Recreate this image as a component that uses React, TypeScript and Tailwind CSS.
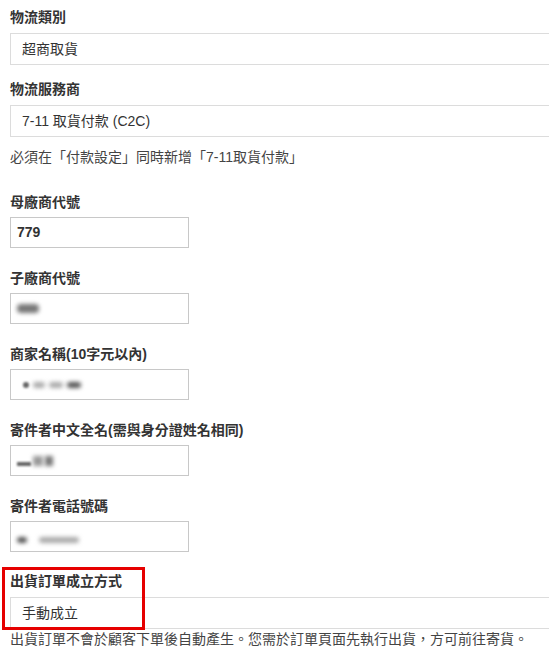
import React from "react";

const font = {
  fontFamily: '"Liberation Sans", "Noto Sans CJK TC", sans-serif',
};

function Label({ children }: { children: React.ReactNode }) {
  return <div className="h-5 leading-5 text-[14px] font-bold text-[#333]">{children}</div>;
}

function WideBox({ children }: { children: React.ReactNode }) {
  return (
    <div className="-mr-6 mt-[6px] flex h-[32px] items-center border border-[#dcdcdc] bg-white pl-[11px] text-[14px] text-[#333]">
      {children}
    </div>
  );
}

function SmallBox({ children }: { children?: React.ReactNode }) {
  return (
    <div className="mt-[5px] flex h-[31px] w-[179px] items-center border border-[#c8c8c8] bg-white pl-[6px] text-[14px] text-[#333]">
      {children}
    </div>
  );
}

function Blur({ w, dark = false }: { w: number; dark?: boolean }) {
  return (
    <span
      className={`inline-block h-[6px] rounded-full blur-[2px] ${dark ? "bg-[#555]" : "bg-[#aaa]"}`}
      style={{ width: w }}
    />
  );
}

function Group({ label, children }: { label: string; children: React.ReactNode }) {
  return (
    <div className="mb-[20px]">
      <Label>{label}</Label>
      {children}
    </div>
  );
}

export default function App() {
  return (
    <div className="relative h-[655px] w-[549px] overflow-hidden bg-white pl-[10px] pt-[7px]" style={font}>
      <Label>物流類別</Label>
      <WideBox>超商取貨</WideBox>

      <div className="mt-[14px]">
        <Label>物流服務商</Label>
        <WideBox>7-11 取貨付款 (C2C)</WideBox>
      </div>

      <div className="mt-[10px] h-5 leading-5 text-[14px] text-[#444]">
        必須在「付款設定」同時新增「7-11取貨付款」
      </div>

      <div className="mt-[25px]">
        <Group label="母廠商代號">
          <SmallBox>
            <span className="font-bold">779</span>
          </SmallBox>
        </Group>

        <Group label="子廠商代號">
          <SmallBox>
            <span className="flex items-center gap-1">
              <span className="inline-block h-[9px] w-[22px] rounded-sm bg-[#777] blur-[2px]" />
            </span>
          </SmallBox>
        </Group>

        <Group label="商家名稱(10字元以內)">
          <SmallBox>
            <span className="flex items-center gap-[4px] pl-[6px]">
              <span className="inline-block h-[6px] w-[6px] rounded-full bg-[#666] blur-[1px]" />
              <Blur w={12} />
              <Blur w={14} />
              <Blur w={14} dark />
            </span>
          </SmallBox>
        </Group>

        <Group label="寄件者中文全名(需與身分證姓名相同)">
          <SmallBox>
            <span className="flex items-end gap-[2px]">
              <span className="inline-block h-[4px] w-[14px] bg-[#666] blur-[1px]" />
              <span className="inline-block h-[10px] w-[10px] bg-[#999] blur-[2px]" />
              <span className="inline-block h-[10px] w-[8px] bg-[#777] blur-[2px]" />
            </span>
          </SmallBox>
        </Group>

        <Group label="寄件者電話號碼">
          <SmallBox>
            <span className="flex items-center gap-[12px] pt-[6px]">
              <Blur w={10} dark />
              <Blur w={40} />
            </span>
          </SmallBox>
        </Group>

        <div className="-mt-[1px]">
          <Label>出貨訂單成立方式</Label>
          <WideBox>手動成立</WideBox>
          <div className="h-5 leading-5 text-[14px] text-[#444]">
            出貨訂單不會於顧客下單後自動產生。您需於訂單頁面先執行出貨，方可前往寄貨。
          </div>
        </div>
      </div>

      <div className="pointer-events-none absolute left-[2px] top-[567px] h-[63px] w-[143px] border-[3px] border-[#e60000]" />
    </div>
  );
}
